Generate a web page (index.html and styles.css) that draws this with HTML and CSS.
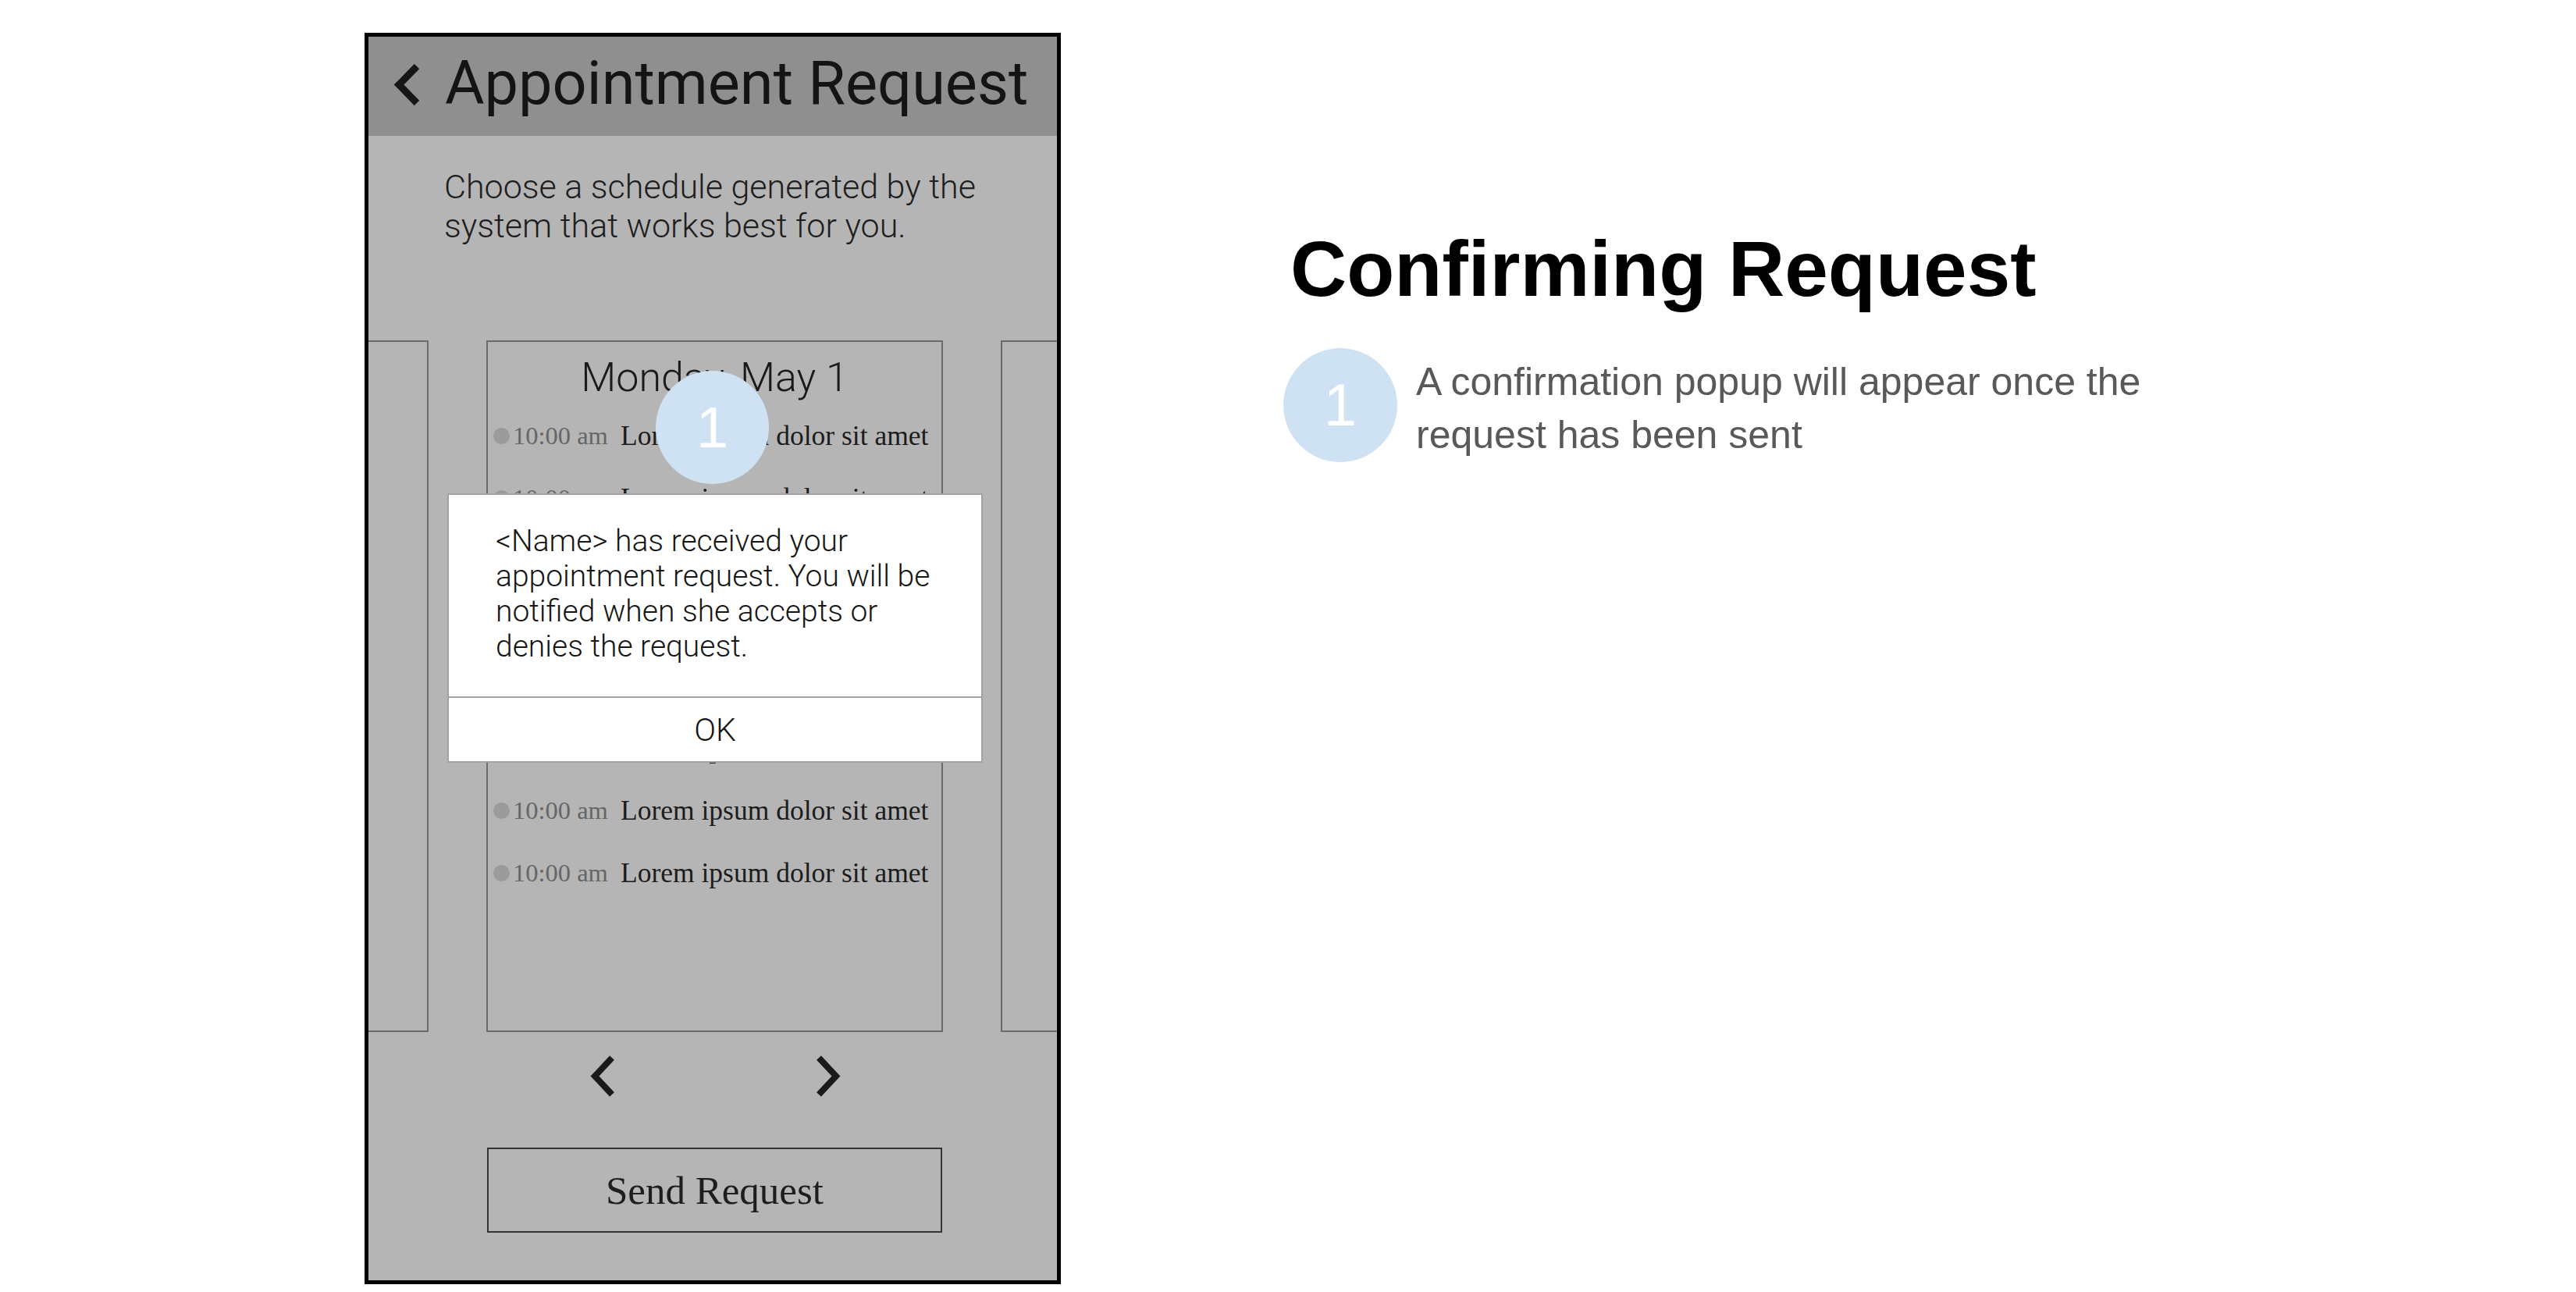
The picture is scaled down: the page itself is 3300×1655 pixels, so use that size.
FILE: index.html
```html
<!DOCTYPE html>
<html lang="en">
<head>
<meta charset="utf-8">
<title>Confirming Request</title>
<link rel="stylesheet" href="styles.css">
</head>
<body>
<div class="page">
  <div class="phone">
    <div class="header">
      <svg class="back" viewBox="0 0 34 53"><polyline points="30,3 7,26.5 30,50" fill="none" stroke="#161616" stroke-width="9"/></svg>
      <span class="header-title">Appointment Request</span>
    </div>
    <p class="intro">Choose a schedule generated by the<br>system that works best for you.</p>
    <div class="carousel">
      <div class="side side-left"></div>
      <div class="card">
        <div class="day">Monday, May 1</div>
        <ul class="slots">
          <li class="slot"><span class="dot"></span><span class="time">10:00 am</span><span class="desc">Lorem ipsum dolor sit amet</span></li>
          <li class="slot"><span class="dot"></span><span class="time">10:00 am</span><span class="desc">Lorem ipsum dolor sit amet</span></li>
          <li class="slot"><span class="dot"></span><span class="time">10:00 am</span><span class="desc">Lorem ipsum dolor sit amet</span></li>
          <li class="slot"><span class="dot"></span><span class="time">10:00 am</span><span class="desc">Lorem ipsum dolor sit amet</span></li>
          <li class="slot"><span class="dot"></span><span class="time">10:00 am</span><span class="desc">Lorem ipsum dolor sit amet</span></li>
          <li class="slot"><span class="dot"></span><span class="time">10:00 am</span><span class="desc">Lorem ipsum dolor sit amet</span></li>
          <li class="slot"><span class="dot"></span><span class="time">10:00 am</span><span class="desc">Lorem ipsum dolor sit amet</span></li>
          <li class="slot"><span class="dot"></span><span class="time">10:00 am</span><span class="desc">Lorem ipsum dolor sit amet</span></li>
        </ul>
      </div>
      <div class="side side-right"></div>
    </div>
    <div class="pager">
      <svg class="nav" viewBox="0 0 33 53"><polyline points="29,3 7,26.5 29,50" fill="none" stroke="#1a1a1a" stroke-width="8"/></svg>
      <svg class="nav" viewBox="0 0 33 53"><polyline points="4,3 26,26.5 4,50" fill="none" stroke="#1a1a1a" stroke-width="8"/></svg>
    </div>
    <div class="send">Send Request</div>

    <div class="popup">
      <div class="popup-body">&lt;Name&gt; has received your<br>appointment request. You will be<br>notified when she accepts or<br>denies the request.</div>
      <div class="popup-ok">OK</div>
    </div>
    <div class="badge">1</div>
  </div>

  <div class="notes">
    <h1 class="notes-title">Confirming Request</h1>
    <div class="note">
      <div class="note-num">1</div>
      <p class="note-text">A confirmation popup will appear once the<br>request has been sent</p>
    </div>
  </div>
</div>
</body>
</html>
```

FILE: styles.css
```css
html, body {
  margin: 0;
  padding: 0;
  background: #ffffff;
}

.page {
  width: 3300px;
  height: 1655px;
  box-sizing: border-box;
  padding: 42px 0 0 467px;
  display: flex;
  align-items: flex-start;
}

/* ---------- phone mockup ---------- */
.phone {
  position: relative;
  flex: none;
  width: 892px;
  height: 1603px;
  box-sizing: border-box;
  border: 5px solid #000;
  background: #b5b5b5;
  overflow: hidden;
  display: flex;
  flex-direction: column;
  font-family: Roboto, "Noto Sans", sans-serif;
}

.header {
  flex: none;
  height: 127px;
  box-sizing: border-box;
  background: #8f8f8f;
  display: flex;
  align-items: flex-start;
  padding: 21px 0 0 32px;
}

.back {
  flex: none;
  width: 34px;
  height: 53px;
  margin-top: 14px;
  margin-right: 32px;
}

.header-title {
  font-size: 77.5px;
  line-height: 77px;
  color: #141414;
  white-space: nowrap;
}

.intro {
  margin: 40px 0 0 97px;
  font-size: 43px;
  line-height: 50px;
  font-weight: 300;
  color: #1e1e1e;
  white-space: nowrap;
}

.carousel {
  flex: none;
  margin-top: 122px;
  height: 886px;
  display: flex;
  gap: 74px;
}

.side {
  box-sizing: border-box;
  border: 2px solid #6b6b6b;
}

.side-left {
  width: 77px;
  border-left: none;
}

.side-right {
  width: 72px;
  border-right: none;
}

.card {
  width: 585px;
  box-sizing: border-box;
  border: 2px solid #6b6b6b;
}

.day {
  margin-top: 14px;
  text-align: center;
  font-size: 52px;
  line-height: 64px;
  font-weight: 300;
  color: #1a1a1a;
}

.slots {
  list-style: none;
  margin: 2px 0 0;
  padding: 0 0 0 7px;
}

.slot {
  height: 80px;
  display: flex;
  align-items: center;
  font-family: "Liberation Serif", serif;
  white-space: nowrap;
}

.dot {
  flex: none;
  width: 21px;
  height: 21px;
  border-radius: 50%;
  background: #9b9b9b;
  margin-right: 4px;
}

.time {
  flex: none;
  width: 138px;
  font-size: 32.5px;
  line-height: 80px;
  color: #666;
}

.desc {
  font-size: 35.5px;
  line-height: 80px;
  color: #1c1c1c;
}

.pager {
  display: flex;
  gap: 257px;
  margin: 30px 0 0 283px;
}

.nav {
  width: 33px;
  height: 53px;
}

.send {
  margin: 65px 0 0 152px;
  width: 583px;
  height: 109px;
  box-sizing: border-box;
  border: 2px solid #333;
  display: flex;
  align-items: center;
  justify-content: center;
  font-family: "Liberation Serif", serif;
  font-size: 51px;
  color: #1e1e1e;
}

/* ---------- overlays ---------- */
.popup {
  position: absolute;
  left: 101px;
  top: 585px;
  width: 686px;
  height: 345px;
  box-sizing: border-box;
  border: 2px solid #a3a3a3;
  background: #fff;
  display: flex;
  flex-direction: column;
}

.popup-body {
  flex: 1;
  padding: 37px 0 0 60px;
  font-size: 39px;
  line-height: 45px;
  font-weight: 300;
  color: #161616;
  white-space: nowrap;
}

.popup-ok {
  flex: none;
  height: 83px;
  box-sizing: border-box;
  border-top: 2px solid #a3a3a3;
  display: flex;
  align-items: center;
  justify-content: center;
  font-size: 41px;
  font-weight: 300;
  color: #161616;
}

.badge {
  position: absolute;
  left: 368px;
  top: 428px;
  width: 145px;
  height: 145px;
  border-radius: 50%;
  background: #cfe2f3;
  color: #fff;
  font-family: "Liberation Sans", Arial, sans-serif;
  font-size: 74px;
  line-height: 1;
  display: flex;
  align-items: center;
  justify-content: center;
}

/* ---------- annotation panel ---------- */
.notes {
  margin-left: 285px;
  font-family: "Liberation Sans", Arial, sans-serif;
}

.notes-title {
  margin: 252px 0 0 9px;
  font-size: 100px;
  line-height: 100px;
  font-weight: bold;
  color: #000;
  white-space: nowrap;
}

.note {
  display: flex;
  align-items: flex-start;
  margin-top: 52px;
}

.note-num {
  flex: none;
  width: 146px;
  height: 146px;
  border-radius: 50%;
  background: #cfe2f3;
  color: #fff;
  font-size: 76px;
  line-height: 1;
  display: flex;
  align-items: center;
  justify-content: center;
}

.note-text {
  margin: 9px 0 0 24px;
  font-size: 50px;
  line-height: 68px;
  color: #595959;
  white-space: nowrap;
}
```
